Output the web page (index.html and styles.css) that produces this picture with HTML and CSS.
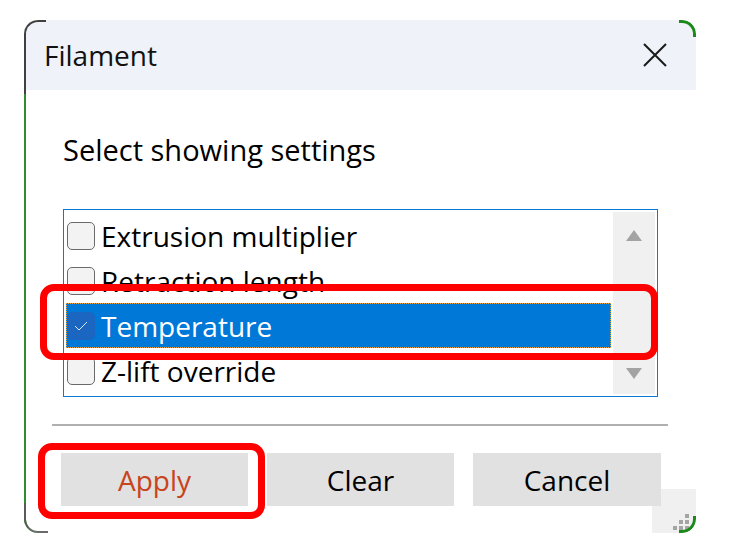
FILE: index.html
```html
<!DOCTYPE html>
<html lang="en">
<head>
<meta charset="utf-8">
<title>Filament</title>
<link rel="stylesheet" href="styles.css">
</head>
<body>
<div class="dialog">
  <div class="titlebar">
    <span class="title">Filament</span>
    <svg class="close" width="24" height="24" viewBox="0 0 24 24"><path d="M1 1 L23 23 M23 1 L1 23" stroke="#1a1a1a" stroke-width="2" fill="none"/></svg>
  </div>
  <div class="content">
    <p class="prompt">Select showing settings</p>
    <div class="listbox">
      <ul class="items">
        <li class="item"><span class="cb"></span><span class="label">Extrusion multiplier</span></li>
        <li class="item"><span class="cb"></span><span class="label">Retraction length</span></li>
        <li class="item selected"><span class="cb checked"><svg width="14" height="10" viewBox="0 0 14 10"><path d="M1 5 L5 9 L13 1" stroke="#dfe9f7" stroke-width="1" fill="none"/></svg></span><span class="label">Temperature</span></li>
        <li class="item"><span class="cb"></span><span class="label">Z-lift override</span></li>
      </ul>
      <div class="scrollbar">
        <span class="arrow up"></span>
        <span class="arrow down"></span>
      </div>
    </div>
    <div class="sep"></div>
    <div class="buttons">
      <button class="btn apply">Apply</button>
      <button class="btn">Clear</button>
      <button class="btn">Cancel</button>
    </div>
  </div>
  <div class="grip">
    <span class="dot d1"></span>
    <span class="dot d2"></span><span class="dot d3"></span>
    <span class="dot d4"></span><span class="dot d5"></span><span class="dot d6"></span>
  </div>
  <div class="edge edge-tl"></div>
  <div class="edge edge-bl"></div>
  <div class="edge edge-tr"></div>
  <div class="edge edge-br"></div>
  <div class="mark mark-list"></div>
  <div class="mark mark-apply"></div>
</div>
</body>
</html>
```

FILE: styles.css
```css
html, body {
  margin: 0;
  padding: 0;
  background: #ffffff;
}

body {
  font-family: "Open Sans", "Noto Sans", sans-serif;
  color: #000;
}

.dialog {
  position: relative;
  margin: 20px 0 0 24px;
  width: 672px;
  height: 513px;
  border-radius: 14px;
  background: #ffffff;
  overflow: hidden;
  box-shadow: inset 2px 0 0 #2e8e2e;
}

.titlebar {
  height: 70px;
  background: #eff2f8;
  display: flex;
  align-items: center;
  justify-content: space-between;
  padding: 0 29px 0 20px;
}

.title {
  font-size: 28px;
  color: #111;
}

.close {
  display: block;
}

.content {
  display: flex;
  flex-direction: column;
}

.prompt {
  margin: 41px 0 0 39px;
  font-size: 29px;
  line-height: 38px;
  height: 38px;
}

.listbox {
  margin: 40px 0 0 39px;
  width: 595px;
  height: 188px;
  box-sizing: border-box;
  border: 1px solid #0a78d6;
  padding: 2px;
  display: flex;
  gap: 2px;
}

.items {
  list-style: none;
  margin: 1px 0 0 0;
  padding: 0;
  width: 545px;
}

.item {
  height: 45px;
  display: flex;
  align-items: center;
  padding-left: 1px;
  box-sizing: border-box;
  font-size: 28px;
  white-space: nowrap;
}

.item .label {
  margin-left: 6px;
}

.item.selected {
  background: #0078d7;
  color: #ffffff;
  outline: 1px dotted #e8a040;
  outline-offset: -1px;
}

.cb {
  width: 28px;
  height: 28px;
  box-sizing: border-box;
  border: 1.5px solid #6a6a6a;
  border-radius: 5px;
  background: #f3f3f3;
  flex: none;
  display: flex;
  align-items: center;
  justify-content: center;
}

.cb.checked {
  background: #1a66c0;
  border-color: #1a66c0;
}

.cb svg {
  display: block;
}

.scrollbar {
  width: 42px;
  background: #f0f0f0;
  position: relative;
  display: flex;
  flex-direction: column;
  justify-content: space-between;
  align-items: center;
  padding: 18px 0 15px;
  box-sizing: border-box;
}

.arrow {
  width: 0;
  height: 0;
  border-left: 8px solid transparent;
  border-right: 8px solid transparent;
}

.arrow.up {
  border-bottom: 11px solid #a3a3a3;
}

.arrow.down {
  border-top: 11px solid #a3a3a3;
}

.sep {
  margin: 27px 0 0 28px;
  width: 616px;
  height: 2px;
  background: #b0b0b0;
}

.buttons {
  margin: 27px 0 0 37px;
  display: grid;
  grid-template-columns: 187px 187px 188px;
  column-gap: 19px;
  position: relative;
  z-index: 2;
}

.btn {
  height: 53px;
  border: none;
  background: #e1e1e1;
  font-family: "Open Sans", "Noto Sans", sans-serif;
  font-size: 28px;
  color: #000;
  padding: 0;
}

.btn.apply {
  color: #c8441c;
}

.grip {
  position: absolute;
  right: 0;
  bottom: 0;
  width: 44px;
  height: 44px;
  background: #f0f0f0;
  z-index: 1;
}

.dot {
  position: absolute;
  width: 4px;
  height: 4px;
  background: #a4a4a4;
}

.d1 { left: 33px; top: 25px; }
.d2 { left: 27px; top: 31px; }
.d3 { left: 33px; top: 31px; }
.d4 { left: 21px; top: 37px; }
.d5 { left: 27px; top: 37px; }
.d6 { left: 33px; top: 37px; }

.edge {
  position: absolute;
  z-index: 3;
  pointer-events: none;
}

.edge-tl {
  left: 0;
  top: 0;
  width: 20px;
  height: 72px;
  border-left: 2px solid #404040;
  border-top: 2px solid #404040;
  border-top-left-radius: 14px;
}

.edge-bl {
  left: 0;
  bottom: 0;
  width: 22px;
  height: 28px;
  border-left: 2px solid #5a5a5a;
  border-bottom: 2px solid #6a6a6a;
  border-bottom-left-radius: 14px;
}

.edge-tr {
  right: 0;
  top: 0;
  width: 14px;
  height: 14px;
  border-right: 3px solid #1b8a1b;
  border-top: 3px solid #1b8a1b;
  border-top-right-radius: 14px;
}

.edge-br {
  right: 0;
  bottom: 0;
  width: 14px;
  height: 14px;
  border-right: 3px solid #1b8a1b;
  border-bottom: 3px solid #1b8a1b;
  border-bottom-right-radius: 14px;
}

.mark {
  position: absolute;
  border: 7px solid #ff0000;
  border-radius: 14px;
  box-sizing: border-box;
  z-index: 4;
}

.mark-list {
  left: 16px;
  top: 264px;
  width: 618px;
  height: 76px;
}

.mark-apply {
  left: 14px;
  top: 423px;
  width: 227px;
  height: 76px;
}
```
